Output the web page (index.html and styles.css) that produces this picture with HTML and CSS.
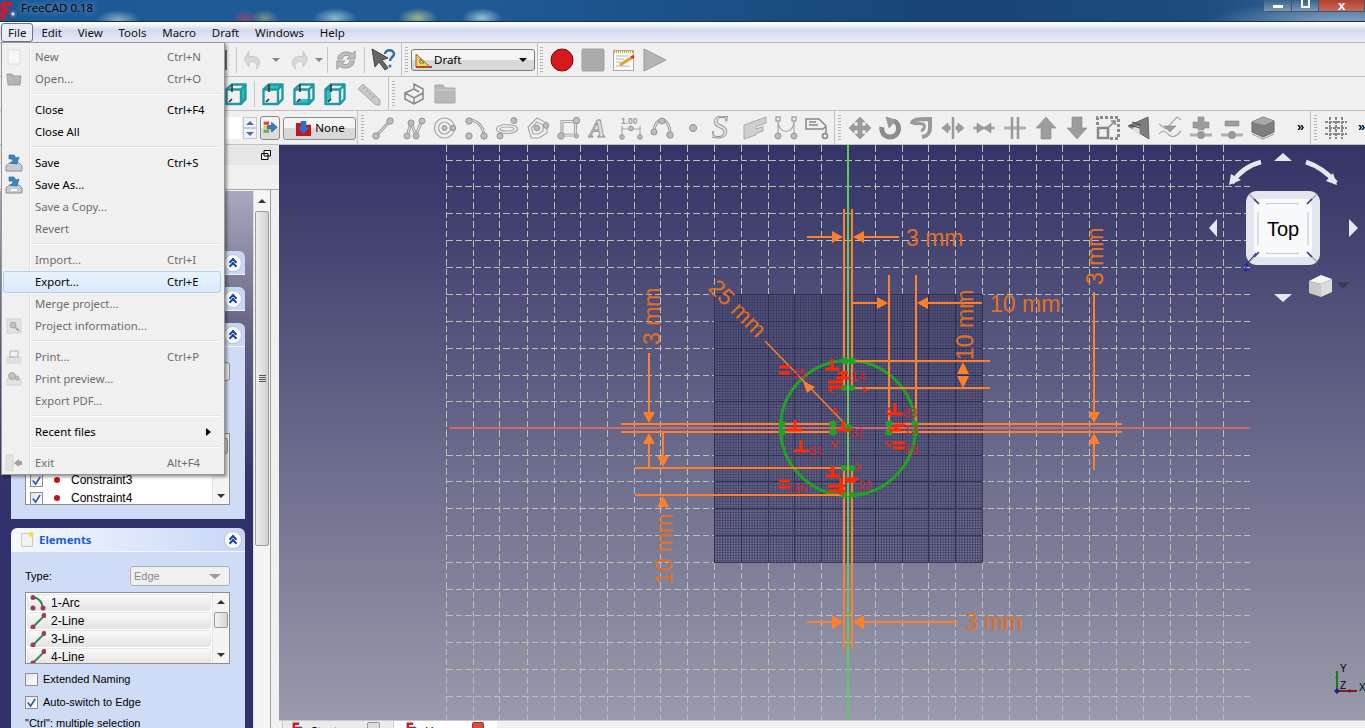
FILE: index.html
```html
<!DOCTYPE html>
<html lang="en">
<head>
<meta charset="utf-8">
<title>FreeCAD 0.18</title>
<link rel="stylesheet" href="styles.css">
</head>
<body>
<svg class="sprite" aria-hidden="true">
  <defs>
    <linearGradient id="meshbg" x1="0" y1="0" x2="0" y2="1"><stop offset="0" stop-color="#52527a"/><stop offset="1" stop-color="#6e6e90"/></linearGradient>
    <pattern id="fine" patternUnits="userSpaceOnUse" x="714" y="294" width="2.69" height="2.69">
      <path class="fine" d="M0 .5H2.69M.5 0V2.69"/>
    </pattern>
    <symbol id="f-logo" viewBox="0 0 20 20"><path class="f-red" d="M1 1h11v4H5v3h5v4H5v7H1z"/><circle class="f-gear" cx="13" cy="13" r="5"/><circle class="f-gear2" cx="13" cy="13" r="1.8"/></symbol>
    <symbol id="cube" viewBox="0 0 24 24"><path class="cb" d="M2.5 7.5 8 2.5h13.5V17L17 22H2.5zM2.5 7.5H17V22M17 7.5l4.500-5"/><path class="cbi" d="M8 2.500V10M8 17l-3 3"/></symbol>
    <symbol id="cube-r" viewBox="0 0 24 24"><path class="cbf" d="M17 7.500 21.500 2.500V17L17 22z"/><use href="#cube"/></symbol>
    <symbol id="cube-t" viewBox="0 0 24 24"><path class="cbf" d="M2.500 7.500 8 2.500h13.500L17 7.500z"/><use href="#cube"/></symbol>
    <symbol id="cube-b" viewBox="0 0 24 24"><path class="cbf" d="M2.500 22 8 17h13.500L17 22z"/><use href="#cube"/></symbol>
    <symbol id="cube-l" viewBox="0 0 24 24"><path class="cbf" d="M2.500 7.500 8 2.500V17L2.500 22z"/><use href="#cube"/></symbol>
    <symbol id="wire" viewBox="0 0 24 24"><path class="w1" d="M5 20 19 5"/><path class="w2" d="M5 20 19 5"/><circle class="nd" cx="5" cy="20" r="3.200"/><circle class="nd" cx="19" cy="5" r="3.200"/></symbol>
    <symbol id="poly" viewBox="0 0 24 24"><path class="w1" d="M5 20 9 7l5 12 6-15"/><path class="w2" d="M5 20 9 7l5 12 6-15"/><circle class="nd" cx="5" cy="20" r="3"/><circle class="nd" cx="9" cy="7" r="3"/><circle class="nd" cx="14" cy="20" r="3"/><circle class="nd" cx="20" cy="5" r="3"/></symbol>
    <symbol id="circ" viewBox="0 0 24 24"><circle class="w3" cx="11.500" cy="12" r="10"/><circle class="w3" cx="11.500" cy="12" r="6"/><circle class="nd" cx="11.500" cy="12" r="2.500"/><circle class="nd" cx="20" cy="12" r="2.800"/></symbol>
    <symbol id="arc" viewBox="0 0 24 24"><path class="w1" d="M5 4c8 0 14 6 15 15"/><path class="w2" d="M5 4c8 0 14 6 15 15"/><circle class="nd" cx="5" cy="5" r="3.200"/><circle class="nd" cx="5" cy="20" r="3.200"/><circle class="nd" cx="20" cy="20" r="3.200"/></symbol>
    <symbol id="slot" viewBox="0 0 24 24"><ellipse class="w3" cx="12" cy="13" rx="10.500" ry="4.500"/><ellipse class="w3" cx="12" cy="13" rx="7" ry="2"/><circle class="nd" cx="19" cy="4.500" r="3"/><circle class="nd" cx="5" cy="20" r="3"/></symbol>
    <symbol id="pent" viewBox="0 0 24 24"><path class="w3" d="M11 2 21 7v10l-8 5H5L2 11z"/><path class="w3" d="M11 6 17 9v6l-5 3H7L5.500 12z"/><circle class="nd" cx="11" cy="12" r="2.800"/><circle class="nd" cx="20" cy="9.500" r="2.800"/></symbol>
    <symbol id="rect" viewBox="0 0 24 24"><path class="w3" d="M4 4.500h15.500V20H4z"/><path class="w3" d="M6 6.500h11.500V18H6z"/><circle class="nd" cx="19.500" cy="4.500" r="3.200"/><circle class="nd" cx="4" cy="20" r="3.200"/><circle class="nd" cx="19.500" cy="20" r="2"/></symbol>
    <symbol id="A" viewBox="0 0 24 24"><text class="ico-a" x="1" y="21">A</text></symbol>
    <symbol id="dimi" viewBox="0 0 24 24"><text class="ico-dim" x="2" y="8">1.00</text><path class="w3" d="M3 13H21M3 10V22M21 10V22"/><circle class="nd" cx="12" cy="12.500" r="2.300"/><circle class="nd" cx="3" cy="21" r="2.300"/><circle class="nd" cx="21" cy="21" r="2.300"/></symbol>
    <symbol id="arc3" viewBox="0 0 24 24"><path class="w1" d="M4 17C4 7 9 4 12 4s8 3 8 14"/><path class="w2" d="M4 17C4 7 9 4 12 4s8 3 8 14"/><circle class="nd" cx="12" cy="5" r="3"/><circle class="nd" cx="4" cy="16" r="3"/><circle class="nd" cx="20" cy="19" r="3.200"/></symbol>
    <symbol id="pt" viewBox="0 0 24 24"><circle class="nd" cx="12" cy="12" r="3.600"/></symbol>
    <symbol id="S" viewBox="0 0 24 24"><text class="ico-s" x="-1" y="22">S</text></symbol>
    <symbol id="facestr" viewBox="0 0 24 24"><path class="sol" d="M1 9 23 1v6l-10 3.500V13l7-2.500V15l-7 2.500V19L1 23z"/></symbol>
    <symbol id="bsp" viewBox="0 0 24 24"><path class="w3" d="M4 3V20M20 3V20M4 5c0 14 16 14 16 0"/><rect class="sq" x="2" y="1" width="4" height="4"/><rect class="sq" x="18" y="1" width="4" height="4"/><circle class="nd" cx="4" cy="20" r="3"/><circle class="nd" cx="20" cy="20" r="3"/></symbol>
    <symbol id="lbl" viewBox="0 0 24 24"><path class="w4" d="M1 3h13l7 7-3 3H1zM4 6h7M4 9h9M21 11v7"/><circle class="w4" cx="20" cy="20" r="2.500"/></symbol>
    <symbol id="move" viewBox="0 0 24 24"><path class="sol2" d="M12 1l5 5h-3v4h4V7l5 5-5 5v-3h-4v4h3l-5 5-5-5h3v-4H6v3l-5-5 5-5v3h4V6H7z"/></symbol>
    <symbol id="rot" viewBox="0 0 24 24"><path class="thick" d="M15 5c7 3 6 16-4 16C5 21 2 16 3 11"/><path class="sol2" d="M7 1l10 3-7 8z"/></symbol>
    <symbol id="off" viewBox="0 0 24 24"><path class="thick2" d="M2 8C2 4 6 3 20 3v9c0 6-3 8-8 9"/><path class="thick3" d="M4 9c0-2 9-2 10 0s0 5-3 6"/></symbol>
    <symbol id="upg" viewBox="0 0 24 24"><path class="sol2" d="M1 12 7 7v3h2v4H7v3zM23 12l-6-5v3h-2v4h2v3z"/><path class="w-bar" d="M12 1V23"/></symbol>
    <symbol id="dwn" viewBox="0 0 24 24"><path class="w-bar2" d="M1 12H23"/><path class="sol2" d="M5 7l7 5-7 5zM19 7l-7 5 7 5z"/></symbol>
    <symbol id="trim" viewBox="0 0 24 24"><path class="w-bar2" d="M1 12H23"/><path class="w-bar" d="M9 1V23M15 1V23"/></symbol>
    <symbol id="up" viewBox="0 0 24 24"><path class="sol2" d="M12 1 22 12h-5v11H7V12H2z"/></symbol>
    <symbol id="down" viewBox="0 0 24 24"><path class="sol2" d="M12 23 2 12h5V1h10v11h5z"/></symbol>
    <symbol id="scale" viewBox="0 0 24 24"><path class="dash" d="M1.500 9V1.500H22.500V22.500H14"/><path class="w-box" d="M2 12h10v10H2z"/><path class="w-arrow" d="M13 11l6-6M15 5h4v4"/></symbol>
    <symbol id="shape" viewBox="0 0 24 24"><path class="dark" d="M1 10 21 1l1 22z"/><path class="lite" d="M5 12l7-2 1 9-4-2z"/><path class="w-line" d="M3 9l10 3M5 6l9 3"/></symbol>
    <symbol id="wave" viewBox="0 0 24 24"><path class="w3" d="M1 8 8 13 19 1l4 3M1 18c4-5 7-2 10 1s7 2 12-4"/><path class="sol2" d="M6 10h12l-6 6z"/></symbol>
    <symbol id="plus" viewBox="0 0 24 24"><path class="sol2" d="M9 1h6v5h5v6h-5v2H9v-2H4V6h5z"/><path class="w-bar2" d="M1 19H23"/><circle class="nd2" cx="12" cy="19" r="4"/></symbol>
    <symbol id="minus" viewBox="0 0 24 24"><path class="sol2" d="M5 5h14v5H5z"/><path class="w-bar2" d="M1 19H23"/><circle class="nd2" cx="12" cy="19" r="4"/></symbol>
    <symbol id="box3d" viewBox="0 0 24 24"><path class="dark" d="M1 6 12 1l11 4v11l-11 5L1 16z"/><path class="top3" d="M1 6 12 1l11 4-10 4z"/><path class="w3" d="M1 18l11 5 11-5"/></symbol>
    <symbol id="gridi" viewBox="0 0 24 24"><path class="w-grid" d="M6 1V23M12 1V23M18 1V23M1 6H23M1 12H23M1 18H23"/></symbol>
  </defs>
</svg>

<div class="app">
  <header class="titlebar">
    <svg class="title-logo"><use href="#f-logo"/></svg>
    <span class="title-text">FreeCAD 0.18</span>
    <div class="winbtns">
      <span class="wb wb-min"><i class="g-min"></i></span>
      <span class="wb wb-max"><i class="g-max"></i></span>
      <span class="wb wb-close">x</span>
    </div>
  </header>

  <nav class="menubar">
    <span class="mi mi-active">File</span>
    <span class="mi">Edit</span>
    <span class="mi">View</span>
    <span class="mi">Tools</span>
    <span class="mi">Macro</span>
    <span class="mi">Draft</span>
    <span class="mi">Windows</span>
    <span class="mi">Help</span>
  </nav>

  <div class="tb">
    <div class="grp g-a">
      <span class="sliver"></span>
      <span class="sep"></span>
      <span class="slot w34"><svg class="ic20" viewBox="0 0 24 24"><path class="undo" d="M6 1v7C18 6 23 14 15 23c2-7-2-10-9-9v6L0 11z"/></svg></span>
      <span class="slot w10"><i class="drop"></i></span>
      <span class="slot w34"><svg class="ic20" viewBox="0 0 24 24"><path class="undo" d="M18 1v7C6 6 1 14 9 23c-2-7 2-10 9-9v6l6-9z"/></svg></span>
      <span class="slot w8"><i class="drop"></i></span>
      <span class="slot w4"></span>
      <span class="sep"></span>
      <span class="slot w36"><svg class="ic22" viewBox="0 0 24 24"><path class="refresh" d="M3 11C3 4 12 1 19 5l3-3v9h-9l3-3c-4-2-7-1-8 3zM21 13c0 7-9 10-16 6l-3 3v-9h9l-3 3c4 2 7 1 8-3z"/></svg></span>
      <span class="sep"></span>
      <span class="slot w36"><svg class="ic26" viewBox="0 0 26 26"><path class="arrow" d="M2 2 18 11l-6 2 6 8-3 2-6-8-4 5z"/><path class="q" d="M15 7c0-5 9-5 9 0 0 3-4 3-4 7"/><circle class="q-dot" cx="20" cy="19" r="1.500"/></svg></span>
    </div>
    <div class="grp g-b">
      <span class="handle"></span>
      <div class="wbcombo">
        <svg class="ic18" viewBox="0 0 18 18"><path class="draft1" d="M1 16V3l14 13z"/><path class="draft2" d="M5 12V8l4 4z"/><path class="draft3" d="M1 16h16"/></svg>
        <span class="wbname">Draft</span>
        <i class="drop drop-dark"></i>
      </div>
    </div>
    <div class="grp g-c">
      <span class="handle"></span>
      <span class="slot w31"><svg class="ic24" viewBox="0 0 24 24"><circle class="rec" cx="12" cy="12" r="11"/></svg></span>
      <span class="slot w31"><svg class="ic24" viewBox="0 0 24 24"><rect class="stop" x="1" y="1" width="22" height="22" rx="1"/></svg></span>
      <span class="slot w31"><svg class="ic24" viewBox="0 0 24 24"><rect class="note" x="1.500" y="2.500" width="20" height="20"/><path class="note-top" d="M2 3.500H21"/><path class="note-l" d="M4 8H16M4 11H12M4 14H9M4 18H18"/><path class="pencil" d="M8 17 19 10"/><path class="pen-tip" d="M19 10l3-2"/></svg></span>
      <span class="slot w31"><svg class="ic24" viewBox="0 0 24 24"><path class="play" d="M1 1 23 12 1 23z"/></svg></span>
    </div>
  </div>

  <div class="tb">
    <div class="grp g-d">
      <span class="slot w31"><svg class="ic24"><use href="#cube-r"/></svg></span>
      <span class="gap3"></span><span class="sep"></span><span class="gap2"></span>
      <span class="slot w31"><svg class="ic24"><use href="#cube-t"/></svg></span>
      <span class="slot w31"><svg class="ic24"><use href="#cube-b"/></svg></span>
      <span class="slot w31"><svg class="ic24"><use href="#cube-l"/></svg></span>
      <span class="slot w38"><svg class="ic24" viewBox="0 0 24 24"><path class="ruler" d="M1 7 6 2 23 18v5h-4z"/><path class="ruler-t" d="M6 7l2-2M9 10l2-2M12 13l2-2M15 16l2-2"/></svg></span>
    </div>
    <div class="grp g-e">
      <span class="handle"></span>
      <span class="slot w31"><svg class="ic24" viewBox="0 0 24 24"><path class="w4 part" d="M3 11 12 7V2l9 5v10l-9 5-9-5zM3 11l9 5 9-5M12 16v6M12 7l5 3"/></svg></span>
      <span class="slot w31"><svg class="ic24" viewBox="0 0 24 24"><path class="folder" d="M2 3h8l2 3h10v15H2z"/><path class="folder2" d="M2 8h20"/></svg></span>
    </div>
  </div>

  <div class="tb">
    <div class="grp g-f">
      <span class="spin-field"></span>
      <span class="spin"><i class="spin-b"><b class="up-a"></b></i><i class="spin-b"><b class="dn-a"></b></i></span>
      <span class="btn-sm"><svg class="ic16" viewBox="0 0 18 20"><path class="stk1" d="M1 2h7v4H1z"/><path class="stk2" d="M1 7h7v4H1z"/><path class="stk3" d="M1 12h7v4H1z"/><path class="stk4" d="M6 7h5V3l7 6-7 6v-4H6z"/></svg></span>
      <span class="btn-none"><svg class="ic15" viewBox="0 0 16 16"><path class="bk" d="M0 2h5l1 2h10v12H0z"/><path class="bk-a" d="M5 0h6v7h3l-6 7-6-7h3z"/></svg>None</span>
    </div>
    <div class="grp g-g">
      <span class="handle"></span>
      <span class="slot w31"><svg class="ic24"><use href="#wire"/></svg></span>
      <span class="slot w31"><svg class="ic24"><use href="#poly"/></svg></span>
      <span class="slot w31"><svg class="ic24"><use href="#circ"/></svg></span>
      <span class="slot w31"><svg class="ic24"><use href="#arc"/></svg></span>
      <span class="slot w31"><svg class="ic24"><use href="#slot"/></svg></span>
      <span class="slot w31"><svg class="ic24"><use href="#pent"/></svg></span>
      <span class="slot w31"><svg class="ic24"><use href="#rect"/></svg></span>
      <span class="slot w31"><svg class="ic24"><use href="#A"/></svg></span>
      <span class="slot w31"><svg class="ic24"><use href="#dimi"/></svg></span>
      <span class="slot w31"><svg class="ic24"><use href="#arc3"/></svg></span>
      <span class="slot w31"><svg class="ic24"><use href="#pt"/></svg></span>
      <span class="slot w31"><svg class="ic24"><use href="#S"/></svg></span>
      <span class="slot w31"><svg class="ic24"><use href="#facestr"/></svg></span>
      <span class="slot w31"><svg class="ic24"><use href="#bsp"/></svg></span>
      <span class="slot w31"><svg class="ic24"><use href="#lbl"/></svg></span>
    </div>
    <div class="grp g-h">
      <span class="handle"></span>
      <span class="slot w31"><svg class="ic24"><use href="#move"/></svg></span>
      <span class="slot w31"><svg class="ic24"><use href="#rot"/></svg></span>
      <span class="slot w31"><svg class="ic24"><use href="#off"/></svg></span>
      <span class="slot w31"><svg class="ic24"><use href="#upg"/></svg></span>
      <span class="slot w31"><svg class="ic24"><use href="#dwn"/></svg></span>
      <span class="slot w31"><svg class="ic24"><use href="#trim"/></svg></span>
      <span class="slot w31"><svg class="ic24"><use href="#up"/></svg></span>
      <span class="slot w31"><svg class="ic24"><use href="#down"/></svg></span>
      <span class="slot w31"><svg class="ic24"><use href="#scale"/></svg></span>
      <span class="slot w31"><svg class="ic24"><use href="#shape"/></svg></span>
      <span class="slot w31"><svg class="ic24"><use href="#wave"/></svg></span>
      <span class="slot w31"><svg class="ic24"><use href="#plus"/></svg></span>
      <span class="slot w31"><svg class="ic24"><use href="#minus"/></svg></span>
      <span class="slot w31"><svg class="ic24"><use href="#box3d"/></svg></span>
      <span class="more">»</span>
    </div>
    <div class="grp g-i">
      <span class="handle"></span>
      <span class="slot w31"><svg class="ic24"><use href="#gridi"/></svg></span>
      <span class="more more2">»</span>
    </div>
  </div>

  <main class="main">
    <aside class="dock">
      <div class="dock-title"><svg class="float-ic" viewBox="0 0 10 10"><path class="float-p" d="M3 .5h6.500V6H3zM.5 3.500H7V9.500H.5z"/></svg></div>
      <div class="dock-tabs"></div>
      <div class="dock-frame">
        <div class="task">
          <section class="box box-1"><div class="box-h"><span class="chev"><i class="chev-a"></i><i class="chev-a"></i></span></div></section>
          <section class="box box-2"><div class="box-h"><span class="chev"><i class="chev-a"></i><i class="chev-a"></i></span></div></section>
          <section class="box box-3">
            <div class="box-h"><span class="chev"><i class="chev-a"></i><i class="chev-a"></i></span></div>
            <div class="box-b">
              <div class="combo-hidden"></div>
              <div class="clist">
                <div class="clist-rows">
                  <div class="crow"><span class="chk chk-on"><svg viewBox="0 0 12 12"><path d="M2 6l3 4 5-8"/></svg></span><i class="dot"></i><span>Constraint3</span></div>
                  <div class="crow"><span class="chk chk-on"><svg viewBox="0 0 12 12"><path d="M2 6l3 4 5-8"/></svg></span><i class="dot"></i><span>Constraint4</span></div>
                </div>
                <div class="lscroll"><b class="up-b"></b><i class="lthumb lthumb-low"></i><b class="dn-b"></b></div>
              </div>
            </div>
          </section>
          <section class="box box-4">
            <div class="box-h">
              <svg class="el-ic" viewBox="0 0 14 16"><path class="el-p" d="M.5 1.500h12v14H.5z"/><circle class="el-c" cx="11" cy="2.500" r="2.500"/></svg>
              <span class="box-title">Elements</span>
              <span class="chev"><i class="chev-a"></i><i class="chev-a"></i></span>
            </div>
            <div class="box-b box-b4">
              <div class="type-row">
                <span>Type:</span>
                <span class="combo-dis">Edge<i class="drop drop-dis"></i></span>
              </div>
              <div class="elist">
                <div class="elist-rows">
                  <div class="erow"><svg class="eic" viewBox="0 0 16 16"><path class="e-g" d="M3 2c6 1 9 5 10 11"/><circle class="e-n" cx="3" cy="2.500" r="2.500"/><circle class="e-n" cx="3" cy="13" r="2.500"/><circle class="e-n" cx="13" cy="13" r="2.500"/></svg>1-Arc</div>
                  <div class="erow"><svg class="eic" viewBox="0 0 16 16"><path class="e-g" d="M3 14 14 3"/><circle class="e-n" cx="3" cy="14" r="2.500"/><circle class="e-n" cx="14" cy="2.500" r="2.500"/></svg>2-Line</div>
                  <div class="erow"><svg class="eic" viewBox="0 0 16 16"><path class="e-g" d="M3 14 14 3"/><circle class="e-n" cx="3" cy="14" r="2.500"/><circle class="e-n" cx="14" cy="2.500" r="2.500"/></svg>3-Line</div>
                  <div class="erow"><svg class="eic" viewBox="0 0 16 16"><path class="e-g" d="M3 14 14 3"/><circle class="e-n" cx="3" cy="14" r="2.500"/><circle class="e-n" cx="14" cy="2.500" r="2.500"/></svg>4-Line</div>
                </div>
                <div class="lscroll"><b class="up-b"></b><i class="lthumb"></i><b class="dn-b"></b></div>
              </div>
              <label class="cb-row cb-first"><span class="chk"></span>Extended Naming</label>
              <label class="cb-row cb-second"><span class="chk chk-on"><svg viewBox="0 0 12 12"><path d="M2 6l3 4 5-8"/></svg></span>Auto-switch to Edge</label>
              <p class="hint">"Ctrl": multiple selection</p>
            </div>
          </section>
        </div>
        <div class="vscroll"><b class="up-b"></b><span class="vthumb"><i class="grip"></i></span></div>
      </div>
    </aside>

    <div class="viewcol">
      <div class="viewport">
        <svg class="scene" viewBox="279 145 1086 575">
          <path class="grid" d="M446 160.500H1250M446 186.500H1250M446 213.500H1250M446 240.500H1250M446 267.500H1250M446 294.500H1250M446 321.500H1250M446 348.500H1250M446 375.500H1250M446 401.500H1250M446 455.500H1250M446 481.500H1250M446 508.500H1250M446 535.500H1250M446 562.500H1250M446 589.500H1250M446 615.500H1250M446 642.500H1250M446 669.500H1250M446 696.500H1250"/>
          <path class="grid" d="M446.500 145V720M473.500 145V720M499.500 145V720M527.500 145V720M554.500 145V720M580.500 145V720M607.500 145V720M634.500 145V720M660.500 145V720M687.500 145V720M714.500 145V720M741.500 145V720M768.500 145V720M794.500 145V720M821.500 145V720M875.500 145V720M902.500 145V720M928.500 145V720M955.500 145V720M982.500 145V720M1009.500 145V720M1036.500 145V720M1062.500 145V720M1089.500 145V720M1116.500 145V720M1143.500 145V720M1170.500 145V720M1196.500 145V720M1223.500 145V720"/>
          <rect class="mesh-base" x="714" y="294" width="269" height="269"/>
          <rect class="mesh" x="714" y="294" width="269" height="269"/>
          <path class="mesh-major" d="M714.500 294V563M741.500 294V563M768.500 294V563M794.500 294V563M821.500 294V563M848.500 294V563M875.500 294V563M902.500 294V563M928.500 294V563M955.500 294V563M982.500 294V563M714 294.500H983M714 321.500H983M714 348.500H983M714 375.500H983M714 401.500H983M714 428.500H983M714 455.500H983M714 481.500H983M714 508.500H983M714 535.500H983M714 562.500H983"/>

          <path class="axis-x" d="M450 428H1250"/>
          <path class="axis-y" d="M848 145V720"/>
          <circle class="geo" cx="848" cy="428" r="67.500"/>
          <path class="geo-ln" d="M782 424H833M782 432H833M889 424H916M889 432H916M844 361V388M852 361V388M844 468V495M852 468V495"/>

          <g class="dims">
            <path d="M844 209V388M852 209V388M844 468V649M852 468V649"/>
            <path d="M852 361H990M852 388H990M889 275V424M916 275V424"/>
            <path d="M621 424H833M621 432H833M889 424H1122M889 432H1122"/>
            <path d="M635 468H852M635 495H852"/>
            <path d="M807 237H834M857 237H899M852 303H879M925 303H982"/>
            <path d="M649 353V414M649 442V469M663 432V458M1094 292V414M1094 442V470"/>
            <path d="M807 622H834M857 622H958"/>
            <path class="thin" d="M765 341 849 428"/>
          </g>
          <g class="heads">
            <path d="M843 237 832 231V243zM853 237 864 231V243z"/>
            <path d="M888 303 877 297V309zM917 303 928 297V309z"/>
            <path d="M843 622 832 615V629zM853 622 864 615V629z"/>
            <path d="M649 423 643 412H655zM649 433 643 444H655zM1094 423 1088 412H1100zM1094 433 1088 444H1100z"/>
            <path d="M663 467 657 456H669zM663 496 657 507H669z"/>
            <path d="M963 362 957 374H969zM963 388 957 376H969z"/>
            <path d="M803 381 815 387 807 393z"/>
          </g>
          <text class="dimt" x="906" y="246">3 mm</text>
          <text class="dimt" x="990" y="312">10 mm</text>
          <text class="dimt" x="965" y="630">3 mm</text>
          <text class="dimt" transform="rotate(-90 1103 285)" x="1103" y="285">3 mm</text>
          <text class="dimt" transform="rotate(-90 660 345)" x="660" y="345">3 mm</text>
          <text class="dimt" transform="rotate(-90 973 360)" x="973" y="360">10 mm</text>
          <text class="dimt" transform="rotate(-90 672 584)" x="672" y="584">10 mm</text>
          <text class="dimt" transform="rotate(45 707 289)" x="707" y="289">25 mm</text>

          <g class="pts">
            <circle cx="845" cy="361" r="3.500"/><circle cx="852" cy="361" r="3.500"/>
            <circle cx="844" cy="388" r="3"/><circle cx="852" cy="388" r="3"/>
            <circle cx="782" cy="424" r="3.500"/><circle cx="782" cy="432" r="3.500"/>
            <circle cx="833" cy="424" r="3.500"/><circle cx="833" cy="432" r="3.500"/>
            <circle cx="848" cy="428" r="4"/>
            <circle cx="889" cy="424" r="3.500"/><circle cx="889" cy="432" r="3.500"/>
            <circle cx="915" cy="424" r="3.500"/><circle cx="915" cy="432" r="3.500"/>
            <circle cx="844" cy="468" r="3"/><circle cx="852" cy="468" r="3"/>
            <circle cx="844" cy="495" r="3"/><circle cx="852" cy="495" r="3"/>
          </g>
          <path class="cons" d="M825 369H839M832 359V369M787 430H802M795 420V430M794 451H809M801 440V451M888 414H903M895 403V414M826 476H840M833 466V476M837 430H850M843 421V430M889 430H902M896 425V430M836 378H850M843 371V378M841 478V495M845 479H858"/>
          <path class="cons" d="M779 367H790M779 373H790M779 481H790M779 487H790M828 382H843M828 387H843M828 486H845M828 491H845M893 443H905M893 448H905M893 425H905M838 373H848M846 481H856"/>
          <path class="cons-thin" d="M832 414l3-6 3 6M832 441l3 6 3-6M833 387l-4 3 4 3M863 387l4 3-4 3M833 467l-4 3 4 3M856 463l5 4-5 4M886 414l3-6 3 6M886 441l3 6 3-6"/>
          <g class="cont">
            <text x="792" y="378">35</text><text x="792" y="493">35</text>
            <text x="809" y="455">31</text><text x="850" y="437">31</text>
            <text x="903" y="417">33</text><text x="904" y="454">13</text><text x="904" y="434">13</text>
            <text x="851" y="381">14</text><text x="858" y="490">22</text>
          </g>

          <g class="navi">
            <path class="n-fill" d="M1283 153l9 8h-18zM1283 302l-9-8h18zM1209 228l8-9v18zM1358 228l-9-9v18z"/>
            <path class="n-arc" d="M1261 162C1249 165 1239 172 1232 183"/>
            <path class="n-arc" d="M1306 162C1318 166 1328 173 1336 183"/>
            <path class="n-fill" d="M1229 185l2-11 10 6zM1337 185l-11-4 7-8z"/>
            <rect class="n-outer" x="1246" y="191" width="74" height="74" rx="11"/>
            <rect class="n-inner" x="1254" y="199" width="58" height="58" rx="6"/>
            <path class="n-diag" d="M1249 194l9 9M1317 194l-9 9M1249 262l9-9M1317 262l-9-9"/>
            <path class="n-dk" d="M1254 199l5 5M1312 199l-5 5M1254 257l5-5M1312 257l-5-5"/>
            <path class="n-lines" d="M1267 205v-1.500H1298v1.500M1258 212V245M1308 212V245M1267 252v1.500H1298V252"/>
            <text class="n-top" x="1283" y="236">Top</text>
            <path class="n-z" d="M1256 253 1246 265"/>
            <text class="n-zt" x="1243" y="271">z</text>
            <path class="c-top" d="M1309 281l12-6 11 4-11 5z"/>
            <path class="c-l" d="M1309 281l12 3v13l-12-4z"/>
            <path class="c-r" d="M1321 284l11-5v13l-11 5z"/>
            <path class="n-menu" d="M1336 282h14l-7 7z"/>
          </g>

          <g class="tri">
            <path class="t-x" d="M1337 691H1357"/><path class="t-xh" d="M1349 689l4 2-4 2z"/>
            <path class="t-y" d="M1337 691V671"/><path class="t-yh" d="M1335 678l2-3 2 3z"/>
            <path class="t-zh" d="M1337 688l3 3-3 3-3-3z"/>
            <text x="1340" y="672">Y</text><text x="1340" y="689">Z</text><text x="1359" y="691">X</text>
          </g>
        </svg>
      </div>
      <div class="tabs">
        <span class="tab"><svg class="tab-ic"><use href="#f-logo"/></svg><span class="tab-t">Start page</span><i class="tab-x"></i></span>
        <span class="tab tab-on"><svg class="tab-ic"><use href="#f-logo"/></svg><span class="tab-t">Unnamed</span><i class="tab-x tab-x-on"></i></span>
      </div>
    </div>
  </main>

  <div class="menu">
    <div class="m-row dis"><span class="m-ic"><svg class="ic16" viewBox="0 0 16 16"><path class="mi-doc" d="M2 1h12v14H2z"/></svg></span><span class="m-t">New</span><span class="m-s">Ctrl+N</span></div>
    <div class="m-row dis"><span class="m-ic"><svg class="ic16" viewBox="0 0 16 16"><path class="mi-fold" d="M1 3h5l2 2h7l-1 9H2z"/></svg></span><span class="m-t">Open...</span><span class="m-s">Ctrl+O</span></div>
    <div class="m-sep"></div>
    <div class="m-row"><span class="m-ic"></span><span class="m-t">Close</span><span class="m-s">Ctrl+F4</span></div>
    <div class="m-row"><span class="m-ic"></span><span class="m-t">Close All</span></div>
    <div class="m-sep"></div>
    <div class="m-row"><span class="m-ic"><svg class="ic18" viewBox="0 0 18 18"><path class="mi-disk" d="M4 9h10l3 3v5H1v-5z"/><path class="mi-blue" d="M4 1h5l2 3 3-1-2 7-7-1 3-2-1-2-3 0z"/></svg></span><span class="m-t">Save</span><span class="m-s">Ctrl+S</span></div>
    <div class="m-row"><span class="m-ic"><svg class="ic18" viewBox="0 0 18 18"><path class="mi-disk" d="M4 9h10l3 3v5H1v-5z"/><path class="mi-blue" d="M4 1h5l2 3 3-1-2 7-7-1 3-2-1-2-3 0z"/><path class="mi-wh" d="M6 14h6"/></svg></span><span class="m-t">Save As...</span></div>
    <div class="m-row dis"><span class="m-ic"></span><span class="m-t">Save a Copy...</span></div>
    <div class="m-row dis"><span class="m-ic"></span><span class="m-t">Revert</span></div>
    <div class="m-sep"></div>
    <div class="m-row dis"><span class="m-ic"></span><span class="m-t">Import...</span><span class="m-s">Ctrl+I</span></div>
    <div class="m-row hov"><span class="m-ic"></span><span class="m-t">Export...</span><span class="m-s">Ctrl+E</span></div>
    <div class="m-row dis"><span class="m-ic"></span><span class="m-t">Merge project...</span></div>
    <div class="m-row dis"><span class="m-ic"><svg class="ic16" viewBox="0 0 16 16"><path class="mi-lite" d="M1 1h14v14H1z"/><circle class="mi-gr" cx="7" cy="7" r="3"/><path class="mi-gr2" d="M9 9l4 4"/></svg></span><span class="m-t">Project information...</span></div>
    <div class="m-sep"></div>
    <div class="m-row dis"><span class="m-ic"><svg class="ic16" viewBox="0 0 16 16"><path class="mi-lite" d="M1 8h14v6H1z"/><path class="mi-gr3" d="M4 2h8v6H4z"/></svg></span><span class="m-t">Print...</span><span class="m-s">Ctrl+P</span></div>
    <div class="m-row dis"><span class="m-ic"><svg class="ic16" viewBox="0 0 16 16"><path class="mi-lite" d="M1 8h14v6H1z"/><circle class="mi-gr" cx="6" cy="5" r="3.500"/><circle class="mi-gr" cx="11" cy="7" r="2"/></svg></span><span class="m-t">Print preview...</span></div>
    <div class="m-row dis"><span class="m-ic"></span><span class="m-t">Export PDF...</span></div>
    <div class="m-sep"></div>
    <div class="m-row"><span class="m-ic"></span><span class="m-t">Recent files</span><i class="m-arrow"></i></div>
    <div class="m-sep"></div>
    <div class="m-row dis"><span class="m-ic"><svg class="ic18" viewBox="0 0 18 18"><path class="mi-lite" d="M1 1h7v16l-7-1z"/><path class="mi-ex" d="M9 9l5-4v2h3v4h-3v2z"/></svg></span><span class="m-t">Exit</span><span class="m-s">Alt+F4</span></div>
  </div>
</div>
</body>
</html>
```

FILE: styles.css
```css
* { box-sizing: border-box; }
html, body { margin: 0; padding: 0; height: 100%; overflow: hidden; background: #f0f0f0; }
body { font: 11.5px/1 "Noto Sans", "Liberation Sans", sans-serif; color: #000; }
i, b { display: block; font-style: normal; }
svg { display: block; }
.sprite { position: absolute; width: 0; height: 0; }
.app { position: relative; width: 1365px; height: 728px; display: flex; flex-direction: column; overflow: hidden; }

/* title bar */
.titlebar {
  height: 22px; flex: none; display: flex; align-items: center; border-bottom: 1px solid #12304f;
  background:
    radial-gradient(ellipse 22px 10px at 118px 20px, rgba(200,215,215,.65), transparent),
    radial-gradient(ellipse 14px 8px at 245px 18px, rgba(190,70,90,.6), transparent),
    radial-gradient(ellipse 14px 8px at 265px 18px, rgba(190,180,110,.6), transparent),
    radial-gradient(ellipse 22px 10px at 335px 18px, rgba(190,225,225,.7), transparent),
    radial-gradient(ellipse 20px 10px at 418px 18px, rgba(200,210,140,.75), transparent),
    radial-gradient(ellipse 20px 10px at 482px 18px, rgba(190,225,225,.75), transparent),
    radial-gradient(ellipse 130px 22px at 1340px 22px, rgba(150,175,200,.8), transparent),
    linear-gradient(90deg, #1b5a98 0, #205a94 480px, #174478 950px, #1c4c80 1200px, #3e6c98 1365px);
}
.title-logo { width: 20px; height: 20px; margin-right: 1px; flex: none; }
.f-red { fill: #d6162a; }
.f-gear { fill: #3e5f92; stroke: #2a4a78; }
.f-gear2 { fill: #d0dcec; }
.title-text { font-size: 11.500px; line-height: 14px; color: #000; font-family: "Open Sans", "Noto Sans", sans-serif; margin-top: -6px; text-shadow: 0 0 6px rgba(255,255,255,.65); }
.winbtns { margin-left: auto; align-self: flex-start; display: flex; height: 12px; border: 1px solid #3c5676; border-top: 0; border-radius: 0 0 0 5px; }
.wb { display: flex; align-items: flex-end; justify-content: center; height: 11px; color: #fff; border-right: 1px solid #3c5676; background: linear-gradient(#3a6288, #7a98b4); overflow: hidden; }
.wb-min { width: 28px; }
.wb-max { width: 27px; }
.wb-close { width: 45px; background: linear-gradient(#b04030, #c86a58); border: 0; font: bold 13px/12px "Liberation Sans", sans-serif; align-items: flex-start; }
.g-min { width: 10px; height: 3px; background: #fff; margin-bottom: 3px; }
.g-max { width: 9px; height: 8px; border: 2px solid #fff; border-top: 0; margin-bottom: 3px; }

/* menu bar */
.menubar { height: 21px; flex: none; display: flex; align-items: center; padding: 1px 0 0 1px; border-bottom: 1px solid #b4b6bc;
  background: linear-gradient(#fff 0, #fff 1px, #dfe4f2 6px, #d3daee 8px, #e8ebf7 20px); }
.mi { padding: 0 7px; height: 19px; display: flex; align-items: center; margin-right: 1.700px; color: #111; font-size: 11.500px; }
.mi-active { border: 1px solid #70737c; border-radius: 3px; background: #e8edf8; padding: 0 6px; margin-right: 1px; }

/* toolbars */
.tb { height: 34px; flex: none; display: flex; align-items: center; border-bottom: 1px solid #c0c0c0; background: #f0f0f0; }
.grp { display: flex; align-items: center; height: 33px; flex: none; }
.g-a { width: 402px; justify-content: flex-end; border-right: 1px solid #c4c4c4; }
.g-b { width: 136px; border-right: 1px solid #c4c4c4; padding-left: 2px; }
.g-c { padding-left: 1px; }
.g-d { width: 389px; justify-content: flex-end; border-right: 1px solid #c4c4c4; }
.g-e { padding-left: 2px; }
.g-f { width: 358px; justify-content: flex-end; border-right: 1px solid #c4c4c4; padding: 1px 1px 0 0; }
.g-g { width: 477px; border-right: 1px solid #c4c4c4; padding-left: 2px; }
.g-h { width: 476px; border-right: 1px solid #c4c4c4; padding-left: 2px; }
.g-i { padding-left: 2px; }
.handle { width: 3px; height: 26px; margin: 0 3px 0 1px; background: repeating-linear-gradient(#b4b4b4 0 1px, transparent 1px 3px); flex: none; }
.slot { display: flex; align-items: center; justify-content: center; flex: none; height: 30px; }
.w4 { width: 4px; } .w8 { width: 8px; } .w10 { width: 10px; } .w31 { width: 31px; } .w34 { width: 34px; } .w36 { width: 36px; } .w38 { width: 38px; }
.slot.w4 { width: 4px; }
.gap3 { width: 3px; } .gap2 { width: 2px; flex: none; }
.sep { width: 1px; height: 26px; background: #c8c8c8; flex: none; }
.sliver { width: 14px; height: 20px; flex: none; background: linear-gradient(90deg, #777 0 5px, transparent 5px); }
.ic15 { width: 15px; height: 15px; } .ic16 { width: 16px; height: 16px; } .ic18 { width: 18px; height: 18px; }
.ic20 { width: 20px; height: 20px; } .ic22 { width: 22px; height: 22px; } .ic24 { width: 24px; height: 24px; } .ic26 { width: 26px; height: 26px; }
.drop { width: 0; height: 0; border: 4px solid transparent; border-top: 4px solid #888; border-bottom: 0; }
.drop-dark { border-top-color: #000; margin-left: auto; }
.drop-dis { border-top-color: #999; margin-left: auto; border-width: 5px 6px 0; border-bottom: 0; }
.undo { fill: #d8d8d8; stroke: #c4c4c4; }
.refresh { fill: #bdbdbd; stroke: #9a9a9a; }
.arrow { fill: #666; stroke: #444; }
.q { fill: none; stroke: #2f6cb0; stroke-width: 2.5; }
.q-dot { fill: #2f6cb0; }
.wbcombo { display: flex; align-items: center; width: 124px; height: 22px; padding: 0 7px 0 3px; gap: 1px; border: 1px solid #7a7a7a; border-radius: 3px; background: linear-gradient(#f4f4f4 50%, #d8d8d8 50%); }
.wbname { font-size: 11.500px; }
.draft1 { fill: #f3d35a; stroke: #8a6420; }
.draft2 { fill: #f0f0f0; stroke: #8a6420; }
.draft3 { stroke: #b04a20; stroke-width: 2; }
.rec { fill: #d8181c; stroke: #6a0a0a; }
.stop { fill: #aaa; stroke: #a0a0a0; }
.note { fill: #f8f8f4; stroke: #aaa; }
.note-top { stroke: #c8a830; stroke-width: 3; stroke-dasharray: 1 1; }
.note-l { stroke: #b8b8b8; fill: none; }
.pencil { stroke: #e0a030; stroke-width: 3; }
.pen-tip { stroke: #e0302a; stroke-width: 3; }
.play { fill: #b4b4b4; stroke: #9a9a9a; }
.cb { fill: none; stroke: #1d9aa2; stroke-width: 2.4; stroke-linejoin: round; }
.cbi { fill: none; stroke: #333; stroke-width: 1.6; }
.cbf { fill: #2cc0c6; }
.ruler { fill: #c8c8c8; stroke: #a8a8a8; }
.ruler-t { stroke: #999; fill: none; }
.part { fill: #e4e4e4; }
.folder { fill: #b8b8b8; stroke: #a8a8a8; }
.folder2 { stroke: #d0d0d0; }

.spin-field { width: 60px; height: 22px; background: #fff; flex: none; }
.spin { display: flex; flex-direction: column; width: 15px; height: 22px; margin-right: 3px; flex: none; background: #fff; border-left: 1px solid #e4e4e4; }
.spin-b { flex: 1; display: flex; align-items: center; justify-content: center; border: 1px solid #c8c8d0; background: #f0f2f8; }
.up-a { border: 4px solid transparent; border-bottom: 4px solid #4a6eaa; border-top: 0; }
.dn-a { border: 4px solid transparent; border-top: 4px solid #4a6eaa; border-bottom: 0; }
.btn-sm { display: flex; align-items: center; justify-content: center; width: 20px; height: 24px; margin-right: 3px; flex: none; border: 1px solid #888; border-radius: 3px; background: linear-gradient(#f4f4f4 50%, #dcdcdc 50%); }
.stk1 { fill: #d8463a; } .stk2 { fill: #e4c84a; } .stk3 { fill: #5ab45a; } .stk4 { fill: #3d78c4; stroke: #2c5a98; }
.btn-none { display: flex; align-items: center; justify-content: center; gap: 4px; width: 73px; height: 23px; flex: none; font-size: 11.500px; border: 1px solid #8c8c8c; border-radius: 3px; background: linear-gradient(#f4f4f4 50%, #d8d8d8 50%); padding-left: 2px; }
.bk { fill: #c8141e; }
.bk-a { fill: #2a70c8; }
.more { margin-left: 16px; font: bold 13px/1 "Liberation Sans", sans-serif; margin-top: -2px; }
.g-h .more { margin-left: 19px; }
.more2 { margin-left: 7px; }

/* toolbar icon strokes */
.w1 { fill: none; stroke: #a0a0a0; stroke-width: 3; }
.w2 { fill: none; stroke: #ececec; stroke-width: 1; }
.w3 { fill: none; stroke: #a8a8a8; stroke-width: 1.2; }
.w4 { fill: none; stroke: #888; stroke-width: 1.5; }
.nd { fill: #bcbcbc; stroke: #959595; }
.nd2 { fill: #999; }
.sq { fill: #eee; stroke: #888; }
.ico-a { font: italic bold 25px "Liberation Serif", serif; fill: #e0e0e0; stroke: #8c8c8c; stroke-width: .8; }
.ico-s { font: italic 34px "Liberation Serif", serif; fill: #e4e4e4; stroke: #8c8c8c; stroke-width: .8; }
.ico-dim { font: bold 8.5px "Liberation Sans", sans-serif; fill: #999; }
.sol { fill: #cfcfcf; stroke: #aaa; }
.sol2 { fill: #9c9c9c; stroke: #8a8a8a; stroke-width: .6; }
.thick { fill: none; stroke: #8c8c8c; stroke-width: 5; }
.thick2 { fill: none; stroke: #999; stroke-width: 4; }
.thick3 { fill: none; stroke: #999; stroke-width: 3; }
.w-bar { fill: none; stroke: #999; stroke-width: 2.5; }
.w-bar2 { fill: none; stroke: #b0b0b0; stroke-width: 3; }
.dash { fill: none; stroke: #8a8a8a; stroke-width: 3; stroke-dasharray: 3 2; }
.w-box { fill: none; stroke: #888; stroke-width: 2.5; }
.w-arrow { fill: none; stroke: #888; stroke-width: 1.6; }
.dark { fill: #7e7e7e; stroke: #666; }
.lite { fill: #e0e0e0; }
.w-line { stroke: #444; fill: none; }
.top3 { fill: #a8a8a8; }
.w-grid { fill: none; stroke: #888; stroke-width: 2; stroke-dasharray: 3 1; }

/* main */
.main { flex: 1; display: flex; min-height: 0; }
.dock { width: 279px; flex: none; display: flex; flex-direction: column; background: #f0f0f0; font-family: "Liberation Sans", sans-serif; }
.dock-title { height: 20px; flex: none; display: flex; align-items: center; justify-content: flex-end; padding: 0 8px 0 0; background: #e6e6e6; }
.float-ic { width: 10px; height: 10px; }
.float-p { fill: #f6f6f6; stroke: #000; }
.dock-tabs { height: 25px; flex: none; border-bottom: 1px solid #a8a8a8; }
.dock-frame { flex: 1; display: flex; min-height: 0; width: 271px; border-right: 1px solid #a0a0a0; padding-top: 1px; }
.task { width: 253px; flex: none; padding: 60px 8px 0 11px; overflow: hidden; background: linear-gradient(#a8a8c0 0, #60607f 150px, #30306a 300px, #30306a 100%); }
.vscroll { width: 17px; flex: none; display: flex; flex-direction: column; align-items: center; background: #f4f4f4; border-left: 1px solid #dcdcdc; padding-top: 8px; }
.up-b { border: 4px solid transparent; border-bottom: 4px solid #333; border-top: 0; flex: none; }
.dn-b { border: 4px solid transparent; border-top: 4px solid #333; border-bottom: 0; flex: none; }
.vthumb { display: flex; align-items: center; justify-content: center; width: 14px; height: 335px; margin-top: 8px; border: 1px solid #9c9c9c; border-radius: 2px; background: linear-gradient(90deg, #f0f0f0, #d0d0d0); flex: none; }
.grip { width: 7px; height: 7px; background: repeating-linear-gradient(#555 0 1px, transparent 1px 2px); }
.box-h { height: 24px; display: flex; align-items: center; padding: 0 2px 0 10px; border-radius: 6px 6px 0 0; border-bottom: 1px solid #f4f6fc; background: linear-gradient(90deg, #f6f8fe, #c8d6f6); }
.box-1 { margin-bottom: 12px; }
.box-2 { margin-bottom: 12px; }
.box-3 { margin-bottom: 9px; }
.box-b { background: #d0dbf5; }
.box-3 .box-b { height: 172px; padding: 15px 15px 0 14px; }
.chev { margin-left: auto; margin-right: 1px; width: 18px; height: 18px; display: flex; flex-direction: column; align-items: center; justify-content: center; border-radius: 50%; background: #fff; border: 1px solid #b8c4dc; gap: 1px; }
.chev-a { width: 6px; height: 6px; border: 2px solid #1843a8; border-right: 0; border-bottom: 0; transform: rotate(45deg); margin-bottom: -3px; }
.box-title { font: bold 11.400px "Noto Sans", sans-serif; color: #1a5fd0; margin-left: 5px; }
.el-ic { width: 13px; height: 15px; }
.el-p { fill: #f2f2f2; stroke: #c4c4c4; }
.el-c { fill: #f0e030; }
.combo-hidden { height: 19px; width: 100px; margin-left: auto; border: 1px solid #909090; border-radius: 3px; background: #eee; }
.clist { height: 72px; margin-top: 52px; display: flex; border: 1px solid #8e8e8e; background: #fff; overflow: hidden; }
.clist-rows { flex: 1; min-width: 0; display: flex; flex-direction: column; justify-content: flex-end; margin-bottom: -3px; }
.crow { height: 18px; display: flex; align-items: center; padding-left: 4px; font-size: 12px; }
.crow .dot { width: 6px; height: 6px; border-radius: 50%; background: #c81018; margin: 0 11px 0 11px; }
.chk { display: block; width: 13px; height: 13px; border: 1px solid #8e8e8e; background: linear-gradient(135deg, #e4e4e4, #fff); flex: none; }
.chk svg { width: 11px; height: 11px; fill: none; stroke: #2f50b0; stroke-width: 1.8; }
.lscroll { width: 17px; flex: none; display: flex; flex-direction: column; align-items: center; justify-content: space-between; padding: 7px 0 6px; background: #f4f4f4; border-left: 1px solid #e4e4e4; position: relative; }
.lthumb { width: 14px; height: 16px; border: 1px solid #999; background: linear-gradient(90deg, #f4f4f4, #d4d4d4); border-radius: 2px; position: absolute; top: 19px; left: 1px; }
.lthumb-low { top: 4px; }
.box-b4 { height: 177px; padding: 14px 15px 0 14px; }
.type-row { display: flex; align-items: center; justify-content: space-between; height: 20px; font-size: 11px; }
.combo-dis { width: 100px; height: 20px; display: flex; align-items: center; padding: 0 8px 0 3px; color: #8a8a8a; font-size: 11px; border: 1px solid #aeb0b8; border-radius: 3px; background: #f0f0f0; }
.elist { height: 72px; margin-top: 6px; display: flex; border: 1px solid #8e8e8e; background: #fff; overflow: hidden; }
.elist-rows { flex: 1; min-width: 0; padding: 1px 1px 0; }
.erow { height: 17px; margin-bottom: 1px; display: flex; align-items: center; gap: 5px; padding-left: 2px; font-size: 12px; border: 1px solid #e6e6e6; border-radius: 3px; background: linear-gradient(#fafafa, #e4e4e4); }
.eic { width: 16px; height: 16px; flex: none; }
.e-g { fill: none; stroke: #2c8a4a; stroke-width: 1.8; }
.e-n { fill: #a03a5a; }
.cb-row { display: flex; align-items: center; gap: 5px; height: 13px; font-size: 11px; }
.cb-first { margin-top: 9px; }
.cb-second { margin-top: 10px; }
.hint { margin: 9px 0 0; font-size: 11px; }

/* 3D view */
.viewcol { flex: 1; display: flex; flex-direction: column; min-width: 0; }
.viewport { height: 575px; flex: none; background: linear-gradient(#333366, #9a9aac); }
.scene { width: 1086px; height: 575px; }
.grid { fill: none; stroke: #bdbdb6; stroke-width: 1; stroke-dasharray: 6.500 3; shape-rendering: crispEdges; }
.mesh-base { fill: url(#meshbg); }
.fine { fill: none; stroke: #20204a; stroke-width: .7; opacity: .6; }
.mesh { fill: url(#fine); }
.mesh-major { fill: none; stroke: #2a2a50; stroke-width: 1; opacity: .8; shape-rendering: crispEdges; }
.axis-x { stroke: #cd6a70; stroke-width: 2; }
.axis-y { stroke: #60c860; stroke-width: 2; }
.geo { fill: none; stroke: #1fa51f; stroke-width: 3; }
.geo-ln { fill: none; stroke: #1fa51f; stroke-width: 2; }
.dims { fill: none; stroke: #ff7f2a; stroke-width: 2; }
.dims .thin { stroke-width: 1.400; }
.heads { fill: #ff7f2a; }
.dimt { font: 23px "Liberation Sans", sans-serif; fill: #e4701e; }
.pts { fill: #1fa51f; }
.cons { fill: none; stroke: #ff2a00; stroke-width: 3; }
.cons-thin { fill: none; stroke: #ff2a00; stroke-width: 1.200; }
.cont { font: 13px "Liberation Sans", sans-serif; fill: #d8202a; }
.n-fill { fill: #e4e9f0; }
.n-arc { fill: none; stroke: #e4e9f0; stroke-width: 4.500; }
.n-outer { fill: #e2e7ee; }
.n-inner { fill: #f8f9fb; }
.n-diag { stroke: #a8a8b4; stroke-width: 1.500; }
.n-dk { stroke: #3c3c7c; stroke-width: 1.500; }
.n-lines { fill: none; stroke: #c8ccd8; stroke-width: 1.200; }
.n-top { font: 20px "Liberation Sans", sans-serif; fill: #000; text-anchor: middle; }
.n-z { stroke: #1a1ac8; stroke-width: 1; fill: none; }
.n-zt { font: 12px "Liberation Sans", sans-serif; fill: #1a1ac8; }
.c-top { fill: #f4f4f4; } .c-l { fill: #c8c8c8; } .c-r { fill: #dcdcdc; }
.n-menu { fill: #3c3c50; }
.t-x { stroke: #7a1c1c; stroke-width: 2; } .t-xh { fill: #7a1c1c; }
.t-y { stroke: #1c7a1c; stroke-width: 2; } .t-yh { fill: #1c7a1c; }
.t-zh { fill: #20208a; }
.tri { font: 10px "Liberation Sans", sans-serif; }
.tabs { flex: 1; display: flex; align-items: flex-start; gap: 1px; padding: 0 0 0 3px; overflow: hidden; border-top: 1px solid #c8c8c8; background: #f0f0f0; }
.tab { width: 110px; height: 20px; display: flex; align-items: flex-start; padding: 1px 12px 0 9px; border-left: 1px solid #c8c8c8; background: #ebebeb; font-size: 12px; }
.tab-on { width: 104px; background: #fff; padding-left: 12px; padding-right: 13px; }
.tab-ic { width: 12px; height: 12px; flex: none; }
.tab-t { margin-left: 7px; margin-top: 4px; overflow: hidden; white-space: nowrap; }
.tab-x { margin-left: auto; width: 14px; height: 10px; border: 1px solid #999; border-radius: 2px; background: #ddd; }
.tab-x-on { background: #d85040; border-color: #b03020; }

/* file menu */
.menu { position: absolute; left: 1px; top: 42px; width: 224px; height: 433px; padding: 3px 3px 0 1px; background: #f0f0f0; border: 1px solid #979797; box-shadow: 2px 2px 3px rgba(0,0,0,.4); background-image: linear-gradient(90deg, transparent 27px, #e2e3e3 27px, #e2e3e3 28px, #fff 28px, #fff 29px, transparent 29px); }
.m-row { height: 22px; display: flex; align-items: center; font-size: 11.300px; color: #000; border: 1px solid transparent; border-radius: 3px; position: relative; }
.m-row.dis { color: #6d6d6d; }
.m-row.hov { background: linear-gradient(#eaf3fd, #d9e8fb); border-color: #aed0f5; }
.m-ic { width: 31px; flex: none; display: flex; justify-content: center; padding-right: 11px; }
.m-t { flex: none; }
.m-s { position: absolute; left: 163px; }
.m-sep { height: 9px; margin-left: 28px; background: linear-gradient(transparent 3px, #e2e3e3 3px, #e2e3e3 4px, #fff 4px, #fff 5px, transparent 5px); }
.m-arrow { position: absolute; left: 202px; top: 6px; border: 4px solid transparent; border-left: 5px solid #000; border-right: 0; }
.mi-doc { fill: #f6f6f6; stroke: #dcdcdc; }
.mi-fold { fill: #b4b4b4; stroke: #a0a0a0; }
.mi-disk { fill: #c8ccce; stroke: #8a9090; }
.mi-blue { fill: #3a86c4; stroke: #1f5f98; stroke-width: .6; }
.mi-wh { stroke: #fff; stroke-width: 2; }
.mi-lite { fill: #e2e2e2; stroke: #d4d4d4; }
.mi-gr { fill: #c0c0c0; stroke: #aaa; }
.mi-gr2 { stroke: #aaa; stroke-width: 2; }
.mi-gr3 { fill: #f0f0f0; stroke: #b0b0b0; }
.mi-ex { fill: #a0a0a0; }
```
